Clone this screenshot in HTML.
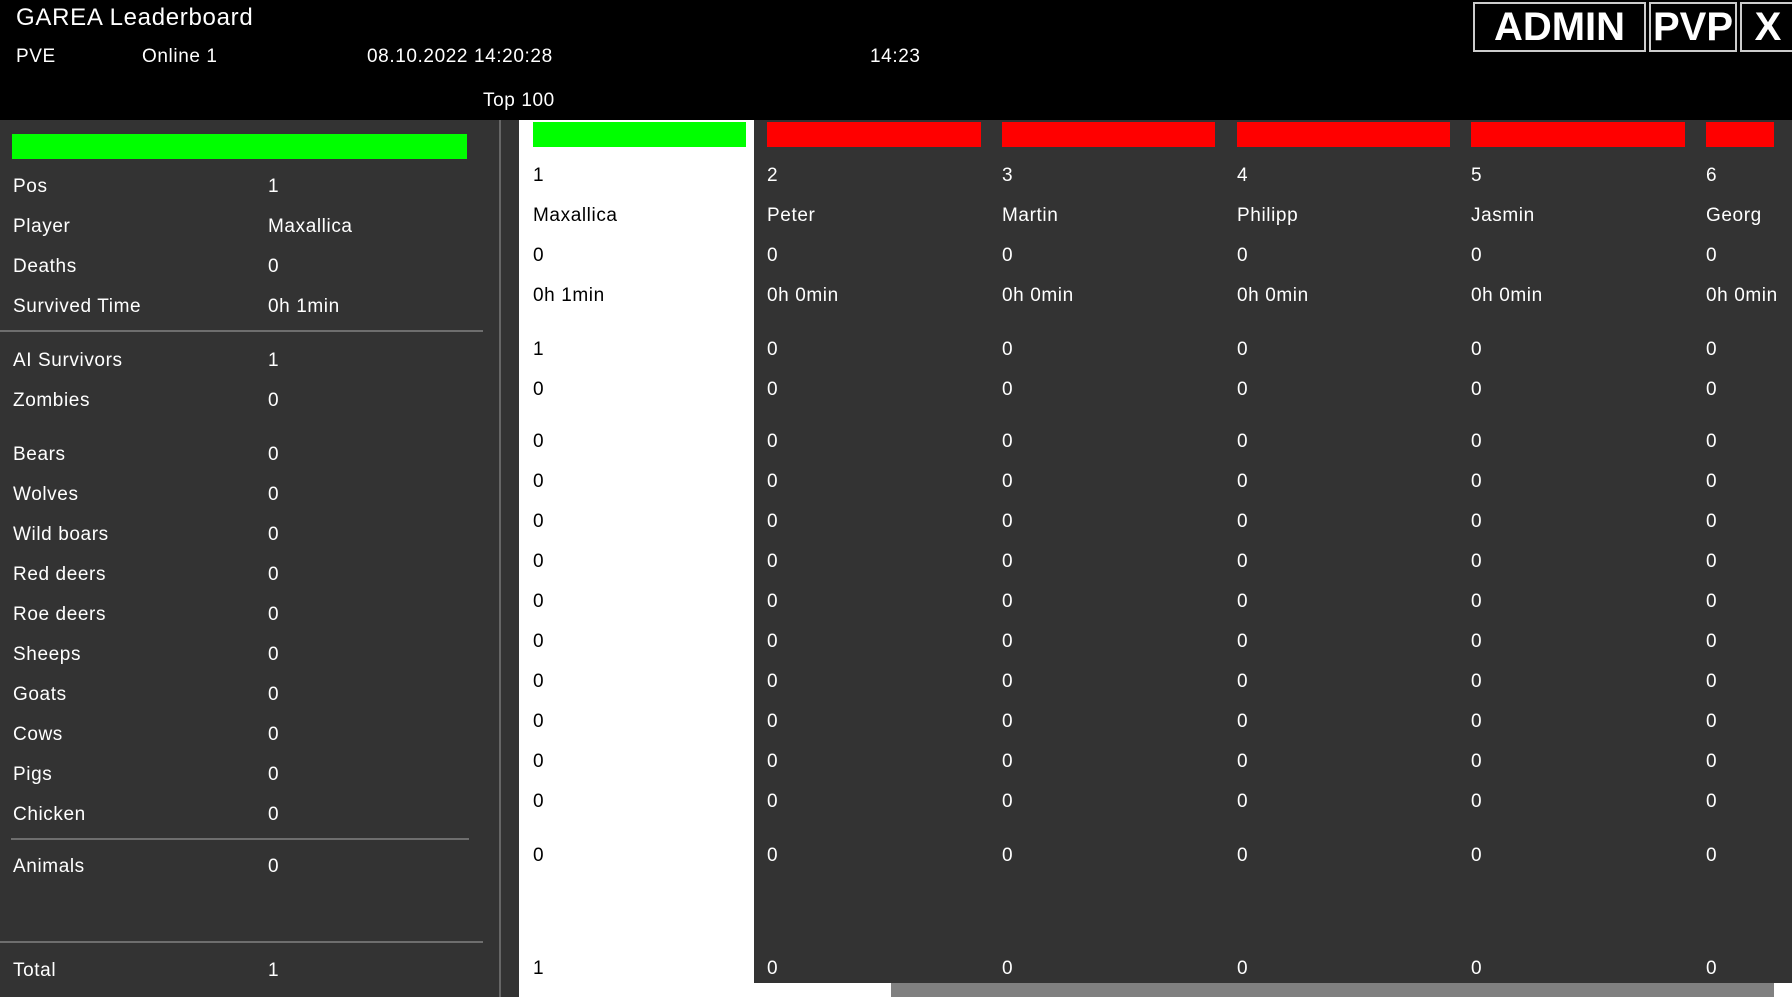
<!DOCTYPE html>
<html><head><meta charset="utf-8"><style>
*{margin:0;padding:0;box-sizing:border-box}
body{width:1792px;height:997px;overflow:hidden;background:#333;font-family:"Liberation Sans",sans-serif;color:#fff;position:relative}
.a{position:absolute;white-space:nowrap;font-size:19px;line-height:24px;letter-spacing:0.6px;margin-top:0px}
#hdr{position:absolute;left:0;top:0;width:1792px;height:120px;background:#000}
.btn{position:absolute;top:2px;height:50px;border:2px solid #ccc;background:#000;color:#fff;font-weight:bold;font-size:40px;line-height:46px;text-align:center}
.ln{position:absolute;height:2px;background:#6e6e6e}
.col{position:absolute;top:120px;height:877px;overflow:hidden}
.col .a{left:14px}
.bar{position:absolute;left:14px;top:2px;height:25px}
</style></head><body>
<div id="hdr">
<div class="a" style="left:16px;top:3px;font-size:24px;line-height:30px;letter-spacing:0.7px">GAREA Leaderboard</div>
<div class="a" style="left:16px;top:45px">PVE</div>
<div class="a" style="left:142px;top:45px">Online 1</div>
<div class="a" style="left:367px;top:45px">08.10.2022 14:20:28</div>
<div class="a" style="left:870px;top:45px">14:23</div>
<div class="a" style="left:483px;top:89px">Top 100</div>
<div class="btn" style="left:1473px;width:173px">ADMIN</div>
<div class="btn" style="left:1649px;width:88px">PVP</div>
<div class="btn" style="left:1740px;width:56px">X</div>
</div>
<div style="position:absolute;left:12px;top:134px;width:455px;height:25px;background:#00ff00"></div>
<div class="a" style="left:13px;top:175px">Pos</div><div class="a" style="left:268px;top:175px">1</div>
<div class="a" style="left:13px;top:215px">Player</div><div class="a" style="left:268px;top:215px">Maxallica</div>
<div class="a" style="left:13px;top:255px">Deaths</div><div class="a" style="left:268px;top:255px">0</div>
<div class="a" style="left:13px;top:295px">Survived Time</div><div class="a" style="left:268px;top:295px">0h 1min</div>
<div class="ln" style="left:0;top:330px;width:483px"></div>
<div class="a" style="left:13px;top:349px">AI Survivors</div><div class="a" style="left:268px;top:349px">1</div>
<div class="a" style="left:13px;top:389px">Zombies</div><div class="a" style="left:268px;top:389px">0</div>
<div class="a" style="left:13px;top:443px">Bears</div><div class="a" style="left:268px;top:443px">0</div>
<div class="a" style="left:13px;top:483px">Wolves</div><div class="a" style="left:268px;top:483px">0</div>
<div class="a" style="left:13px;top:523px">Wild boars</div><div class="a" style="left:268px;top:523px">0</div>
<div class="a" style="left:13px;top:563px">Red deers</div><div class="a" style="left:268px;top:563px">0</div>
<div class="a" style="left:13px;top:603px">Roe deers</div><div class="a" style="left:268px;top:603px">0</div>
<div class="a" style="left:13px;top:643px">Sheeps</div><div class="a" style="left:268px;top:643px">0</div>
<div class="a" style="left:13px;top:683px">Goats</div><div class="a" style="left:268px;top:683px">0</div>
<div class="a" style="left:13px;top:723px">Cows</div><div class="a" style="left:268px;top:723px">0</div>
<div class="a" style="left:13px;top:763px">Pigs</div><div class="a" style="left:268px;top:763px">0</div>
<div class="a" style="left:13px;top:803px">Chicken</div><div class="a" style="left:268px;top:803px">0</div>
<div class="ln" style="left:11px;top:838px;width:458px"></div>
<div class="a" style="left:13px;top:855px">Animals</div><div class="a" style="left:268px;top:855px">0</div>
<div class="ln" style="left:0;top:941px;width:483px"></div>
<div class="a" style="left:13px;top:959px">Total</div><div class="a" style="left:268px;top:959px">1</div>
<div style="position:absolute;left:499px;top:120px;width:2px;height:877px;background:#666"></div>

<div class="col" style="left:519px;width:235px;background:#fff;color:#000">
<div class="bar" style="width:213px;background:#00ff00"></div>
<div class="a" style="top:44px">1</div><div class="a" style="top:84px">Maxallica</div><div class="a" style="top:124px">0</div><div class="a" style="top:164px">0h 1min</div>
<div class="a" style="top:218px">1</div><div class="a" style="top:258px">0</div>
<div class="a" style="top:310px">0</div><div class="a" style="top:350px">0</div><div class="a" style="top:390px">0</div><div class="a" style="top:430px">0</div><div class="a" style="top:470px">0</div><div class="a" style="top:510px">0</div><div class="a" style="top:550px">0</div><div class="a" style="top:590px">0</div><div class="a" style="top:630px">0</div><div class="a" style="top:670px">0</div>
<div class="a" style="top:724px">0</div><div class="a" style="top:837px">1</div>
</div>

<div class="col" style="left:753px;width:235px;height:863px">
<div class="bar" style="width:214px;background:#f00"></div>
<div class="a" style="top:44px">2</div><div class="a" style="top:84px">Peter</div><div class="a" style="top:124px">0</div><div class="a" style="top:164px">0h 0min</div>
<div class="a" style="top:218px">0</div><div class="a" style="top:258px">0</div>
<div class="a" style="top:310px">0</div><div class="a" style="top:350px">0</div><div class="a" style="top:390px">0</div><div class="a" style="top:430px">0</div><div class="a" style="top:470px">0</div><div class="a" style="top:510px">0</div><div class="a" style="top:550px">0</div><div class="a" style="top:590px">0</div><div class="a" style="top:630px">0</div><div class="a" style="top:670px">0</div>
<div class="a" style="top:724px">0</div><div class="a" style="top:837px">0</div>
</div>
<div class="col" style="left:988px;width:235px;height:863px">
<div class="bar" style="width:213px;background:#f00"></div>
<div class="a" style="top:44px">3</div><div class="a" style="top:84px">Martin</div><div class="a" style="top:124px">0</div><div class="a" style="top:164px">0h 0min</div>
<div class="a" style="top:218px">0</div><div class="a" style="top:258px">0</div>
<div class="a" style="top:310px">0</div><div class="a" style="top:350px">0</div><div class="a" style="top:390px">0</div><div class="a" style="top:430px">0</div><div class="a" style="top:470px">0</div><div class="a" style="top:510px">0</div><div class="a" style="top:550px">0</div><div class="a" style="top:590px">0</div><div class="a" style="top:630px">0</div><div class="a" style="top:670px">0</div>
<div class="a" style="top:724px">0</div><div class="a" style="top:837px">0</div>
</div>
<div class="col" style="left:1223px;width:235px;height:863px">
<div class="bar" style="width:213px;background:#f00"></div>
<div class="a" style="top:44px">4</div><div class="a" style="top:84px">Philipp</div><div class="a" style="top:124px">0</div><div class="a" style="top:164px">0h 0min</div>
<div class="a" style="top:218px">0</div><div class="a" style="top:258px">0</div>
<div class="a" style="top:310px">0</div><div class="a" style="top:350px">0</div><div class="a" style="top:390px">0</div><div class="a" style="top:430px">0</div><div class="a" style="top:470px">0</div><div class="a" style="top:510px">0</div><div class="a" style="top:550px">0</div><div class="a" style="top:590px">0</div><div class="a" style="top:630px">0</div><div class="a" style="top:670px">0</div>
<div class="a" style="top:724px">0</div><div class="a" style="top:837px">0</div>
</div>
<div class="col" style="left:1457px;width:235px;height:863px">
<div class="bar" style="width:214px;background:#f00"></div>
<div class="a" style="top:44px">5</div><div class="a" style="top:84px">Jasmin</div><div class="a" style="top:124px">0</div><div class="a" style="top:164px">0h 0min</div>
<div class="a" style="top:218px">0</div><div class="a" style="top:258px">0</div>
<div class="a" style="top:310px">0</div><div class="a" style="top:350px">0</div><div class="a" style="top:390px">0</div><div class="a" style="top:430px">0</div><div class="a" style="top:470px">0</div><div class="a" style="top:510px">0</div><div class="a" style="top:550px">0</div><div class="a" style="top:590px">0</div><div class="a" style="top:630px">0</div><div class="a" style="top:670px">0</div>
<div class="a" style="top:724px">0</div><div class="a" style="top:837px">0</div>
</div>
<div class="col" style="left:1692px;width:100px;height:863px">
<div class="bar" style="width:68px;background:#f00"></div>
<div class="a" style="top:44px">6</div><div class="a" style="top:84px">Georg</div><div class="a" style="top:124px">0</div><div class="a" style="top:164px">0h 0min</div>
<div class="a" style="top:218px">0</div><div class="a" style="top:258px">0</div>
<div class="a" style="top:310px">0</div><div class="a" style="top:350px">0</div><div class="a" style="top:390px">0</div><div class="a" style="top:430px">0</div><div class="a" style="top:470px">0</div><div class="a" style="top:510px">0</div><div class="a" style="top:550px">0</div><div class="a" style="top:590px">0</div><div class="a" style="top:630px">0</div><div class="a" style="top:670px">0</div>
<div class="a" style="top:724px">0</div><div class="a" style="top:837px">0</div>
</div>
<div style="position:absolute;left:754px;top:983px;width:1038px;height:14px;background:#fff"></div>
<div style="position:absolute;left:891px;top:983px;width:883px;height:14px;background:#808080"></div>
</body></html>
